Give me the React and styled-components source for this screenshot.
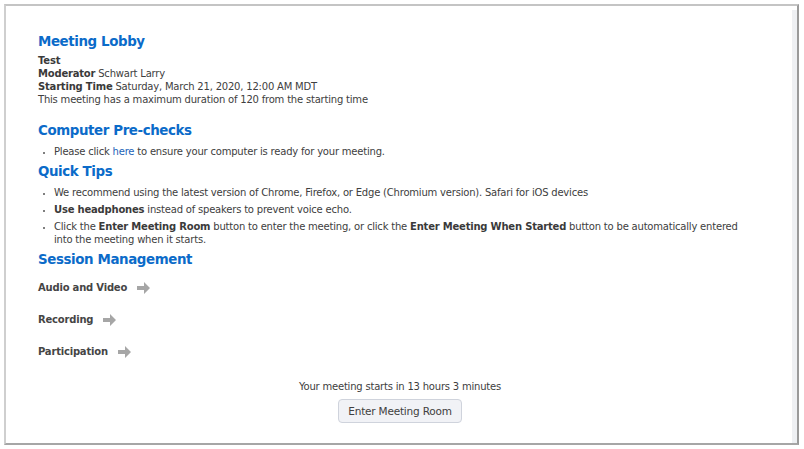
import React from "react";
import styled, { createGlobalStyle } from "styled-components";

const Global = createGlobalStyle`
  html, body { margin: 0; padding: 0; background: #ffffff; }
  body { font-family: "DejaVu Sans", Verdana, sans-serif; color: #404040; }
  * { box-sizing: border-box; }
`;

const Frame = styled.div`
  margin: 4px 5px 0 4px;
  height: 441px;
  display: flex;
  border-top: 2px solid #c4c4c4;
  border-left: 2px solid #cfcfcf;
  border-right: 2px solid #9a9a9a;
  border-bottom: 2px solid #a6a6a6;
  background: #fff;
`;

const Content = styled.div`
  flex: 1;
  padding: 27px 0 0 32px;
  display: flex;
  flex-direction: column;
`;

const Track = styled.div`
  width: 5px;
  margin-top: 4px;
  background: #eef0f3;
`;

const Heading = styled.h2`
  margin: ${(p) => p.$top || 0}px 0 ${(p) => p.$bottom || 0}px;
  font-size: 13.4px;
  letter-spacing: -0.4px;
  line-height: 18px;
  font-weight: bold;
  color: #0b6bc9;
`;

const Line = styled.div`
  font-size: 10px;
  letter-spacing: -0.2px;
  line-height: 13px;
  color: #404040;
`;

const B = styled.b`
  font-weight: bold;
  color: #3a3a3a;
`;

const List = styled.ul`
  margin: 0;
  padding: 0 0 0 16px;
  list-style: disc;
  font-size: 10px;
  letter-spacing: -0.2px;
  line-height: 13px;
  color: #404040;
  max-width: 706px;
  li { margin-bottom: 4px; }
  li::marker { font-size: 8px; color: #555; }
`;

const Link = styled.a`
  color: #1c63b8;
  text-decoration: none;
`;

const SessionList = styled.div`
  display: flex;
  flex-direction: column;
  gap: 19px;
  margin-top: 12px;
`;

const SessionRow = styled.div`
  display: flex;
  align-items: center;
  gap: 10px;
  font-size: 10px;
  letter-spacing: -0.2px;
  line-height: 13px;
  font-weight: bold;
  color: #454545;
`;

const Footer = styled.div`
  display: flex;
  flex-direction: column;
  align-items: center;
  margin: 22px 0 0 -30px;
`;

const Note = styled.div`
  font-size: 10px;
  letter-spacing: -0.2px;
  line-height: 13px;
  color: #404040;
`;

const Button = styled.button`
  margin-top: 6px;
  height: 24px;
  padding: 0 9px;
  border: 1px solid #cfd3dc;
  border-radius: 4px;
  background: #f1f2f6;
  font-family: "DejaVu Sans", Verdana, sans-serif;
  font-size: 10.5px;
  letter-spacing: -0.2px;
  color: #404040;
`;

const Arrow = () => (
  <svg width="13" height="12" viewBox="0 0 13 12" aria-hidden="true">
    <path d="M0 4 H7 V0 L13 6 L7 12 V8 H0 Z" fill="#a6a6a6" />
  </svg>
);

const sessions = ["Audio and Video", "Recording", "Participation"];

export default function App() {
  return (
    <>
      <Global />
      <Frame>
        <Content>
          <Heading $bottom={3}>Meeting Lobby</Heading>
          <Line><B>Test</B></Line>
          <Line><B>Moderator</B> Schwart Larry</Line>
          <Line><B>Starting Time</B> Saturday, March 21, 2020, 12:00 AM MDT</Line>
          <Line>This meeting has a maximum duration of 120 from the starting time</Line>

          <Heading $top={16} $bottom={5}>Computer Pre-checks</Heading>
          <List>
            <li>Please click <Link href="#">here</Link> to ensure your computer is ready for your meeting.</li>
          </List>

          <Heading $top={1} $bottom={5}>Quick Tips</Heading>
          <List>
            <li>We recommend using the latest version of Chrome, Firefox, or Edge (Chromium version). Safari for iOS devices</li>
            <li><B>Use headphones</B> instead of speakers to prevent voice echo.</li>
            <li>Click the <B>Enter Meeting Room</B> button to enter the meeting, or click the <B>Enter Meeting When Started</B> button to be automatically entered into the meeting when it starts.</li>
          </List>

          <Heading $top={1}>Session Management</Heading>
          <SessionList>
            {sessions.map((s) => (
              <SessionRow key={s}>
                {s}
                <Arrow />
              </SessionRow>
            ))}
          </SessionList>

          <Footer>
            <Note>Your meeting starts in 13 hours 3 minutes</Note>
            <Button>Enter Meeting Room</Button>
          </Footer>
        </Content>
        <Track />
      </Frame>
    </>
  );
}
